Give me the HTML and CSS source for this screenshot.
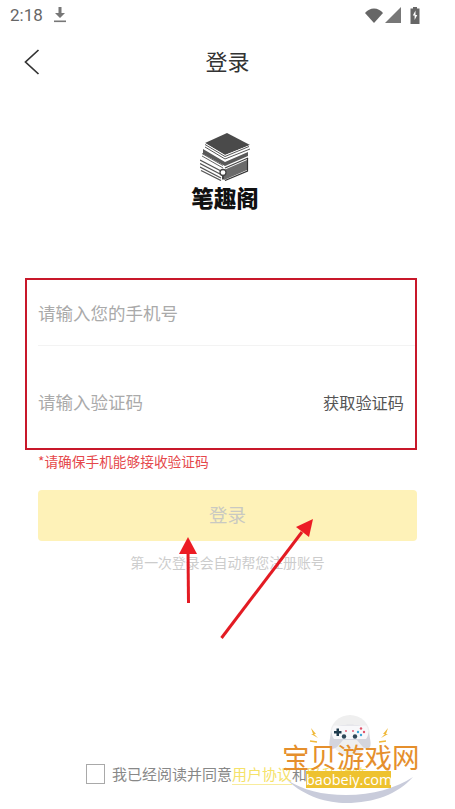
FILE: index.html
```html
<!DOCTYPE html>
<html lang="zh">
<head>
<meta charset="utf-8">
<title>登录</title>
<link rel="stylesheet" href="styles.css">
</head>
<body>
<div class="page">
  <div class="status">
    <div class="status-left">
      <span class="time">2:18</span>
      <svg class="dl" width="14" height="16" viewBox="0 0 14 16"><path d="M5.500 0h3v6H12L7 11 2 6h3.500z" fill="#777"/><rect x="1" y="13.500" width="12" height="1.600" fill="#777"/></svg>
    </div>
    <div class="status-right">
      <svg width="18" height="15" viewBox="0 0 18 15"><path d="M0 5C2.500 2 5.500.5 9 .5s6.500 1.500 9 4.500L9 15z" fill="#666"/></svg>
      <svg width="16" height="16" viewBox="0 0 16 16"><path d="M16 0v16H0z" fill="#777"/></svg>
      <svg width="10" height="17" viewBox="0 0 10 17"><path d="M3 0h4v1.500h2.500V17H.5V1.500H3z" fill="#666"/><path d="M5.500 3.500 2.800 8.500h1.800v4.500L7.300 8H5.500z" fill="#fff"/></svg>
    </div>
  </div>
  <header class="nav">
    <svg class="back" width="16" height="26" viewBox="0 0 16 26"><path d="M14.500 1 1.500 13l13 12" fill="none" stroke="#333" stroke-width="1.700"/></svg>
    <h1 class="title">登录</h1>
  </header>
  <div class="logo">
    <svg class="logo-art" width="50" height="48" viewBox="0 0 50 48">
      <path d="M27 0 5 10l20 12 25-10z" fill="#4a4a4a"/>
      <path d="M5 10v4l20 12 25-10v-4L25 22z" fill="#fff"/>
      <path d="M5 11.500l20 12 24-10M5 14l20 12 25-10" fill="none" stroke="#555" stroke-width="1"/>
      <path d="M3 16l22 13 23-10v4L25 33 3 21z" fill="#5a5a5a"/>
      <path d="M2 20.500l21 12M2 23l21 12" fill="none" stroke="#666" stroke-width="1"/>
      <path d="M24 37l23-10V37L24 47z" fill="#6b6b6b"/>
      <path d="M25 35l23-10" fill="none" stroke="#444" stroke-width="1.200"/>
      <path d="M47.500 25v13L25 47.500" fill="none" stroke="#333" stroke-width="1.200"/>
      <path d="M0 27l21 11M0 30.500l21 11M0 34l21 11M1 37.500l20 10" fill="none" stroke="#555" stroke-width="1.300"/>
      <circle cx="23" cy="39.500" r="3" fill="#fff" stroke="#444" stroke-width="1.300"/>
      <path d="M23 42.500v4" stroke="#444" stroke-width="2"/>
    </svg>
    <div class="logo-name">笔趣阁</div>
  </div>
  <main class="form">
    <div class="fields">
      <div class="row row-phone"><span class="ph">请输入您的手机号</span></div>
      <div class="row row-code"><span class="ph">请输入验证码</span><span class="get">获取验证码</span></div>
    </div>
    <div class="below">
      <p class="warn">*请确保手机能够接收验证码</p>
      <button class="submit" type="button">登录</button>
      <p class="hint">第一次登录会自动帮您注册账号</p>
    </div>
  </main>
  <footer class="agree">
    <span class="check"></span>
    <span class="agree-text">我已经阅读并同意<span class="link">用户协议</span>和<span class="link">隐私政策</span></span>
  </footer>

  <svg class="arrows" width="455" height="809" viewBox="0 0 455 809">
    <path d="M188.500 603 188 550" stroke="#e31b23" stroke-width="3" fill="none"/>
    <path d="M188 537 197 554H179z" fill="#ec1c24"/>
    <path d="M221.500 638 302 532" stroke="#e31b23" stroke-width="3" fill="none"/>
    <path d="M313 519 309 537 296 527z" fill="#ec1c24"/>
  </svg>
  <div class="wm">
    <svg class="wm-art" width="150" height="99" viewBox="0 0 150 99">
      <path d="M7 70C25 87 48 93 66 93c28 0 52-9 67-26-17 11-40 18-67 18-24 0-43-5-59-15z" fill="#c9ccdb"/>
      <circle cx="70" cy="25" r="20" fill="#efefef"/>
      <path d="M54 17c6-3 26-3 32 0 3 5 6 17 4 20-2 3-5 2-8-1l-5-6H63l-5 6c-3 3-6 4-8 1-2-3 1-15 4-20z" fill="#d4d5dd"/>
      <path d="M54 15.500h32c3 4 3 10 0 13.500H54c-3-3.500-3-9.500 0-13.500z" fill="#f8f8fa"/>
      <path d="M56.500 18.500h2.500v2.500h2.500v2.500H59v2.500h-2.500v-2.500H54V21h2.500z" fill="#1e3a4c"/>
      <circle cx="64" cy="26.500" r="2.200" fill="#2f4858"/><circle cx="75" cy="26.500" r="2.200" fill="#2f4858"/>
      <circle cx="66" cy="21" r=".9" fill="#e0526a"/><circle cx="73" cy="21" r=".9" fill="#e0526a"/>
      <circle cx="81" cy="18.500" r="1.200" fill="#e0526a"/><circle cx="81" cy="25" r="1.200" fill="#3ea6d8"/><circle cx="78" cy="22" r="1.200" fill="#3ea6d8"/><circle cx="84" cy="22" r="1.200" fill="#e0526a"/>
      <path d="M31 18l5 6-2 0 4 4-7-4 2 0z" fill="#f0b93a"/>
      <path d="M108 18l-5 6 2 0-4 4 7-4-2 0z" fill="#f0b93a"/>
      <path d="M30 31l7 1M106 31l-7 1" stroke="#f0b93a" stroke-width="1.500"/>
    </svg>
    <div class="wm-name">宝贝游戏网</div>
    <div class="wm-url">baobeiy.com</div>
  </div>
</div>
</body>
</html>
```
FILE: styles.css
```css
* { box-sizing: border-box; margin: 0; padding: 0; }
html, body { width: 455px; height: 809px; overflow: hidden; background: #fff; }
body { font-family: "Noto Sans CJK SC", "Noto Sans", sans-serif; }
.page { position: relative; width: 455px; height: 809px; display: flex; flex-direction: column; overflow: hidden; }

.status { height: 30px; padding: 0 35px 0 10px; display: flex; justify-content: space-between; align-items: center; }
.status-left { display: flex; align-items: center; gap: 10px; }
.time { font-family: Roboto, sans-serif; font-size: 17px; color: #666; line-height: 30px; }
.status-right { display: flex; align-items: center; gap: 2px; }
.status-right svg:last-child { margin-left: 7px; }

.nav { height: 60px; display: flex; align-items: center; justify-content: center; position: relative; }
.back { position: absolute; left: 24px; top: 19px; }
.title { font-size: 22px; font-weight: 400; color: #333; line-height: 32px; }

.logo { margin-top: 43px; height: 145px; display: flex; flex-direction: column; align-items: center; }
.logo-art { margin-right: 5px; flex: none; }
.logo-name { font-size: 22.500px; font-weight: 900; color: #111; line-height: 24px; margin-top: 4px; margin-right: 5px; }

.fields { margin: 0 38px 0 25px; height: 172px; border: 2px solid #c8182a; padding-left: 11px; }
.row { display: flex; align-items: center; justify-content: space-between; }
.row-phone { height: 65px; }
.row-code { height: 103px; border-top: 1px solid #f3f3f3; padding: 9px 11px 0 0; }
.ph { font-size: 17.500px; color: #aaa; line-height: 26px; }
.get { font-size: 16.200px; color: #555; line-height: 24px; }

.below { padding: 1px 38px 0; }
.warn { font-size: 13.700px; color: #e5484b; line-height: 20px; }
.submit { display: block; width: 379px; height: 51px; margin-top: 19px; padding-bottom: 3px; border: 0; border-radius: 4px; background: #fef2b8; color: #c9c9c2; font: inherit; font-size: 18.500px; }
.hint { margin-top: 10px; text-align: center; font-size: 13.900px; line-height: 22px; color: #ccc; }

.agree { position: absolute; left: 86px; top: 764px; display: flex; align-items: center; gap: 7px; height: 20px; }
.check { width: 19px; height: 20px; border: 1px solid #a9a9a9; flex: none; }
.agree-text { font-size: 15px; color: #888; line-height: 20px; white-space: nowrap; }
.link { color: #f5e26a; border-bottom: 1px solid #f8ec9c; }

.arrows { position: absolute; left: 0; top: 0; pointer-events: none; }
.wm { position: absolute; left: 280px; top: 710px; width: 150px; height: 99px; }
.wm-art { position: absolute; left: 0; top: 0; }
.wm-name { position: absolute; left: 2px; top: 28px; font-size: 27.500px; line-height: 36px; color: #e58f2c; white-space: nowrap; }
.wm-url { position: absolute; left: 26px; top: 61px; width: 85px; height: 17px; background: #eec22f; color: #fff; font-family: "Open Sans", sans-serif; font-size: 14.500px; line-height: 17px; text-align: center; white-space: nowrap; }
```
